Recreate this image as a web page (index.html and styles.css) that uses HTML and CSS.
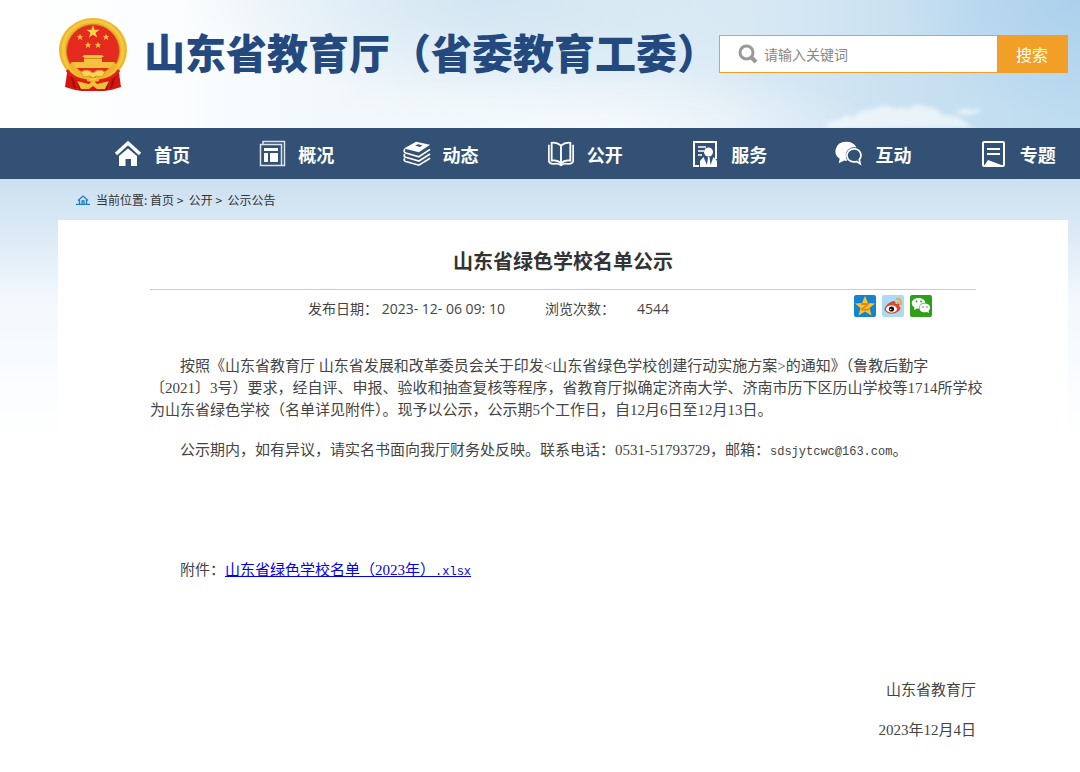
FILE: index.html
```
<!DOCTYPE html>
<html lang="zh-CN">
<head>
    <meta charset="UTF-8">
    <meta name="viewport" content="width=device-width, initial-scale=1.0">
    <title>山东省绿色学校名单公示</title>
    <link rel="stylesheet" href="styles.css">
</head>
<body>
    <header class="header">
        <div class="wrap header-inner">
            <svg class="emblem" viewBox="0 0 70 76" aria-hidden="true">
                <path d="M10 50 L60 50 L63 71 L53 74 L46 75 L24 75 L17 74 L7 71 Z" fill="#d5150f"/>
                <path d="M12 56 L17 72 M58 56 L53 72 M20 62 L22 74 M50 62 L48 74" stroke="#9f0d0b" stroke-width="2"/>
                <ellipse cx="35" cy="34" rx="34" ry="32" fill="#efb52b"/>
                <ellipse cx="35" cy="34" rx="30" ry="29" fill="none" stroke="#f5c83f" stroke-width="3"/>
                <circle cx="35" cy="35" r="26.500" fill="#e52a20" stroke="#c88a1c"/>
                <path d="M35 9 L36.600 13.700 L41.600 13.800 L37.600 16.800 L39.100 21.600 L35 18.700 L30.900 21.600 L32.400 16.800 L28.400 13.800 L33.400 13.700 Z" fill="#ffd34a"/>
                <g fill="#f6c13d">
                    <path d="M22 18 l1 2 2 0 -1.500 1.500 .5 2.500 -2 -1.500 -2 1.500 .5 -2.500 -1.500 -1.500 2 0z"/>
                    <path d="M48 18 l1 2 2 0 -1.500 1.500 .5 2.500 -2 -1.500 -2 1.500 .5 -2.500 -1.500 -1.500 2 0z"/>
                    <path d="M30 26 l1 2 2 0 -1.500 1.500 .5 2.500 -2 -1.500 -2 1.500 .5 -2.500 -1.500 -1.500 2 0z"/>
                    <path d="M40 26 l1 2 2 0 -1.500 1.500 .5 2.500 -2 -1.500 -2 1.500 .5 -2.500 -1.500 -1.500 2 0z"/>
                    <path d="M26 39 H44 L46 41 H44 V46 H57 L54 52 H16 L13 46 H26 V41 H24 Z"/>
                </g>
                <path d="M26 42.500 H44" stroke="#c98b1f"/>
                <path d="M12 48 Q20 60 32 62 M58 48 Q50 60 38 62" fill="none" stroke="#efb52b" stroke-width="5"/>
                <path d="M23 56 Q29 52 35 57 Q41 52 47 56 L44 61 L38 60 L35 62 L32 60 L26 61 Z" fill="#fbd55b" stroke="#d99d20"/>
                <path d="M9 54 Q14 63 29 65 M61 54 Q56 63 41 65" fill="none" stroke="#e02018" stroke-width="3"/>
                <path d="M19 65 L31 68 L35 64 L39 68 L51 65 L47 73 H39 L35 70 L31 73 H23 Z" fill="#f2bf38"/>
            </svg>
            <h1 class="site-name">山东省教育厅（省委教育工委）</h1>
            <form class="search" onsubmit="return false">
                <label class="search-box">
                    <svg width="20" height="20" viewBox="0 0 20 20" aria-hidden="true">
                        <circle cx="8.500" cy="8.500" r="6.500" fill="none" stroke="#999" stroke-width="3"/>
                        <path d="M13 13 L18 18" stroke="#999" stroke-width="4"/>
                    </svg>
                    <input class="search-input" type="text" placeholder="请输入关键词" aria-label="请输入关键词">
                </label>
                <button class="search-btn" type="submit">搜索</button>
            </form>
        </div>
        <svg class="clouds" viewBox="0 0 260 40" preserveAspectRatio="none" aria-hidden="true">
            <g fill="#fff">
                <path d="M5 40 Q8 29 20 28 Q26 19 35 25 Q40 12 53 14 Q64 3 75 13 Q84 8 88 14 Q95 2 106 10 Q120 10 121 22 Q136 20 144 30 L154 40 Z"/>
                <path d="M135 18 Q145 8 152 15 Q160 9 160 17 Q150 25 135 18Z"/>
            </g>
        </svg>
    </header>

    <nav class="nav">
        <div class="wrap nav-list">
            <a class="nav-item" href="#">
                <svg class="nav-icon" viewBox="0 0 28 28">
                    <path d="M2 14 L14 3 L26 14" fill="none" stroke="#fff" stroke-width="3.500"/>
                    <path d="M5 16 L14 8.500 L23 16 V26 H17 V19 H11.500 V26 H5 Z" fill="#fff"/>
                </svg>
                首页
            </a>
            <a class="nav-item" href="#">
                <svg class="nav-icon" viewBox="0 0 28 28">
                    <path d="M5 4 V1.500 H26.500 V25.500 H2.500 V4.500 H23.500 V25" fill="none" stroke="#dbe3ec" stroke-width="1.500"/>
                    <path d="M6 8 H20 V11 H6 Z M6 13 H10 V22 H6 Z M12 13 H20 V22 H12 Z" fill="#fff"/>
                </svg>
                概况
            </a>
            <a class="nav-item" href="#">
                <svg class="nav-icon" viewBox="0 0 30 28">
                    <path d="M1 8 L14 1 L29 4 L17 12 Z M13 5 L18 6.500 L21 4.500 L16 3.500 Z" fill="#fff" fill-rule="evenodd"/>
                    <path d="M2 9 Q0 12 3 13 L17 17 L29 9 M2 14 Q0 17 3 17.500 L17 21.500 L29 14 M2 18.500 Q0 21 3 22 L17 26 L29 18.500" fill="none" stroke="#fff" stroke-width="1.800"/>
                </svg>
                动态
            </a>
            <a class="nav-item" href="#">
                <svg class="nav-icon" viewBox="0 0 30 28">
                    <path d="M15 5 Q10 1 5 2 V21 Q11 20 15 24 Q19 20 25 21 V2 Q20 1 15 5 Z V24" fill="none" stroke="#fff" stroke-width="2"/>
                    <path d="M2 4 V22 Q3 25 8 24.500 Q12 24 15 26 Q18 24 22 24.500 Q27 25 28 22 V4" fill="none" stroke="#fff" stroke-width="1.800"/>
                </svg>
                公开
            </a>
            <a class="nav-item" href="#">
                <svg class="nav-icon" viewBox="0 0 28 28">
                    <path d="M8 26 H3 V2 H25 V19" fill="none" stroke="#fff" stroke-width="2"/>
                    <path d="M7 7 H15 M7 11 H13 M7 15 H11" stroke="#fff" stroke-width="1.500"/>
                    <circle cx="17.500" cy="12" r="4.500" fill="#fff"/>
                    <path d="M9 27 V21 L12.500 17 L16 25 L17 17 H18.500 L19.500 25 L22.500 17 L26 21 V27 Z" fill="#fff"/>
                </svg>
                服务
            </a>
            <a class="nav-item" href="#">
                <svg class="nav-icon" viewBox="0 0 30 28">
                    <path d="M12 1 A11 10 0 0 0 5 19 L4 24 L10 21 Q12 22 13 21 Q9 12 16 8 Q19 6 23 7 Q20 1 12 1 Z" fill="#fff"/>
                    <path d="M21 8.500 A7.500 7 0 1 0 23 22 L27 24.500 L26 20 A7.500 7 0 0 0 21 8.500 Z" fill="none" stroke="#fff" stroke-width="1.800"/>
                </svg>
                互动
            </a>
            <a class="nav-item" href="#">
                <svg class="nav-icon" viewBox="0 0 28 28">
                    <rect x="3" y="2" width="21" height="24" rx="1" fill="none" stroke="#fff" stroke-width="2"/>
                    <path d="M7 9 H20 M7 14 H20" stroke="#fff" stroke-width="1.800"/>
                    <path d="M4 26 L8 20 L24 26 Z" fill="#fff"/>
                </svg>
                专题
            </a>
        </div>
    </nav>

    <main class="main">
        <div class="wrap">
            <div class="crumbs">
                <svg width="14" height="10" viewBox="0 0 14 10" aria-hidden="true">
                    <path d="M2 5.500 L7 1 L12 5.500 M3.500 5 V9 M10.500 5 V9 M0 9.300 H14 M6 9 V6 H8 V9" fill="none" stroke="#1b7fd0" stroke-width="1.300"/>
                </svg>
                <span>当前位置: <a href="#">首页</a> &gt;&nbsp; <a href="#">公开</a> &gt;&nbsp; <a href="#">公示公告</a></span>
            </div>

            <article class="card">
                <h2 class="title">山东省绿色学校名单公示</h2>
                <div class="meta">
                    <span class="date">发布日期： 2023- 12- 06 09: 10</span>
                    <span>浏览次数：</span>
                    <span class="count">4544</span>
                    <div class="share">
                        <a href="#" aria-label="QQ空间">
                            <svg viewBox="0 0 22 22">
                                <rect width="22" height="22" rx="2" fill="#1583d2"/>
                                <path d="M11 1 L14 8 L21 8.500 L15.500 13 L17.500 20.500 L11 16.500 L4.500 20.500 L6.500 13 L1 8.500 L8 8 Z" fill="#fdc524"/>
                                <path d="M7 9 H14 L8 14.500 Q12 15.500 15 14" fill="none" stroke="#e8841c" stroke-width="1.800"/>
                            </svg>
                        </a>
                        <a href="#" aria-label="新浪微博">
                            <svg viewBox="0 0 22 22">
                                <rect width="22" height="22" rx="2" fill="#a9dcf2"/>
                                <path d="M9 7 Q14 4 13.500 9 Q19 8 17 11 Q20 13 17 16 Q12 20 6 18 Q0 15 4 11 Q6 8 9 7 Z" fill="#e6432d"/>
                                <ellipse cx="9.500" cy="14" rx="5.500" ry="3.700" fill="#fff"/>
                                <circle cx="9.500" cy="14" r="2.600" fill="#111"/>
                                <circle cx="8.700" cy="14.500" r=".8" fill="#fff"/>
                                <path d="M14 4 Q20 3 19 10 M15 7 Q17 6.500 17 9" fill="none" stroke="#f5a22b" stroke-width="1.500"/>
                            </svg>
                        </a>
                        <a href="#" aria-label="微信">
                            <svg viewBox="0 0 22 22">
                                <rect width="22" height="22" rx="2" fill="#2f9e1c"/>
                                <path d="M8.500 3 C4 3 1.500 6 1.800 8.500 Q2 11 4.500 12.500 L4 15 L7 13.500 H9 Q9 8 15.500 7.500 Q14 3 8.500 3 Z" fill="#fff"/>
                                <path d="M15 8.500 C11.500 8.500 9.500 10.500 9.500 13 C9.500 17 13.500 18 17 17 L19 18 L18.500 16 C21.500 13 20 8.500 15 8.500 Z" fill="#fff"/>
                                <circle cx="6.500" cy="6.500" r=".9" fill="#2f9e1c"/><circle cx="11" cy="6.500" r=".9" fill="#2f9e1c"/>
                                <circle cx="13" cy="12" r=".8" fill="#2f9e1c"/><circle cx="17" cy="12" r=".8" fill="#2f9e1c"/>
                            </svg>
                        </a>
                    </div>
                </div>

                <div class="content">
                    <p>按照《山东省教育厅 山东省发展和改革委员会关于印发&lt;山东省绿色学校创建行动实施方案&gt;的通知》（鲁教后勤字<br>〔2021〕3号）要求，经自评、申报、验收和抽查复核等程序，省教育厅拟确定济南大学、济南市历下区历山学校等1714所学校<br>为山东省绿色学校（名单详见附件）。现予以公示，公示期5个工作日，自12月6日至12月13日。</p>
                    <p>公示期内，如有异议，请实名书面向我厅财务处反映。联系电话：0531-51793729，邮箱：<span class="mono">sdsjytcwc@163.com</span>。</p>
                    <p class="attach">附件：<a href="#">山东省绿色学校名单（2023年）<span class="mono">.xlsx</span></a></p>
                    <p class="sign">山东省教育厅</p>
                    <p class="sign">2023年12月4日</p>
                </div>
            </article>
        </div>
    </main>
</body>
</html>
```
FILE: styles.css
```
* {
    margin: 0;
    padding: 0;
    box-sizing: border-box;
}
body {
    font-family: "Noto Sans CJK SC", sans-serif;
    color: #333;
    background: #fff;
}
a {
    color: inherit;
    text-decoration: none;
}
.wrap {
    padding: 0 12px 0 58px;
}

/* header */
.header {
    position: relative;
    height: 128px;
    background:
        radial-gradient(ellipse 180px 120px at 100% 0, #acd0ec, transparent),
        radial-gradient(ellipse 300px 100px at 45% 0, rgba(205, 226, 240, 0.8), transparent),
        radial-gradient(ellipse 300px 80px at 55% 110%, rgba(255, 255, 255, 0.8), transparent),
        linear-gradient(to right, #fff 0, #fbfdfe 16%, #e9f3f9 45%, #dcebf5 66%, #c8e0f1 85%, #bddcf0 100%);
}
.header-inner {
    position: relative;
    z-index: 1;
    display: flex;
    align-items: flex-start;
}
.emblem {
    width: 70px;
    height: 76px;
    margin-top: 16px;
    flex: none;
}
.site-name {
    margin: 21px 0 0 16px;
    font-size: 41px;
    line-height: 60px;
    font-weight: 900;
    color: #24497f;
    white-space: nowrap;
}
.search {
    display: flex;
    width: 349px;
    height: 38px;
    margin: 35px 0 0 auto;
    border: 1px solid #f19f27;
    flex: none;
}
.search-box {
    display: flex;
    flex: 1;
    align-items: center;
    gap: 6px;
    padding-left: 18px;
    background: #fff;
}
.search-input {
    flex: 1;
    min-width: 0;
    border: none;
    outline: none;
    font: 14px "Noto Sans CJK SC", sans-serif;
}
.search-input::placeholder {
    color: #888;
}
.search-btn {
    width: 70px;
    border: none;
    background: #f19f27;
    color: #fff;
    font: 16px "Noto Sans CJK SC", sans-serif;
    cursor: pointer;
}
.clouds {
    position: absolute;
    right: 0;
    bottom: 0;
    width: 260px;
    height: 28px;
    opacity: 0.6;
    filter: blur(2px);
}

/* nav */
.nav {
    position: relative;
    background: #335175;
}
.nav-list {
    display: grid;
    grid-template-columns: repeat(7, 1fr);
}
.nav-item {
    display: flex;
    align-items: center;
    gap: 12px;
    height: 51px;
    padding-left: 56px;
    font-size: 18px;
    font-weight: bold;
    color: #fff;
    white-space: nowrap;
}
.nav-icon {
    width: 28px;
    height: 28px;
    flex: none;
}

/* main */
.main {
    background: linear-gradient(to bottom, #cde0f1 0, #dae9f5 50px, #f3f8fd 120px, #fff 260px);
}
.crumbs {
    display: flex;
    align-items: center;
    gap: 6px;
    height: 41px;
    padding-left: 18px;
    font-size: 12px;
}
.card {
    min-height: 552px;
    padding: 24px 92px 0;
    background: #fff;
}
.title {
    padding-bottom: 11px;
    border-bottom: 1px solid #ccc;
    font-size: 20px;
    line-height: 34px;
    text-align: center;
}
.meta {
    display: flex;
    height: 40px;
    padding: 0 44px 0 158px;
    font-family: "Open Sans", "Noto Sans CJK SC", sans-serif;
    font-size: 14px;
    line-height: 38px;
    color: #444;
}
.date {
    margin-right: 40px;
}
.count {
    margin-left: 22px;
}
.share {
    display: flex;
    gap: 6px;
    margin: 5px 0 0 auto;
}
.share svg {
    display: block;
    width: 22px;
    height: 22px;
}
.content {
    padding-top: 25px;
    font-family: "Liberation Serif", "Noto Sans CJK SC", serif;
    font-size: 15px;
    line-height: 22px;
    color: #444;
    white-space: nowrap;
}
.content p {
    margin-bottom: 18px;
    text-indent: 30px;
}
.content .attach {
    margin: 98px 0;
}
.content .attach a {
    color: #00e;
    text-decoration: underline;
}
.content .sign {
    text-align: right;
}
.mono {
    font-family: "Liberation Mono", monospace;
    font-size: 12px;
    line-height: 1;
}
```
